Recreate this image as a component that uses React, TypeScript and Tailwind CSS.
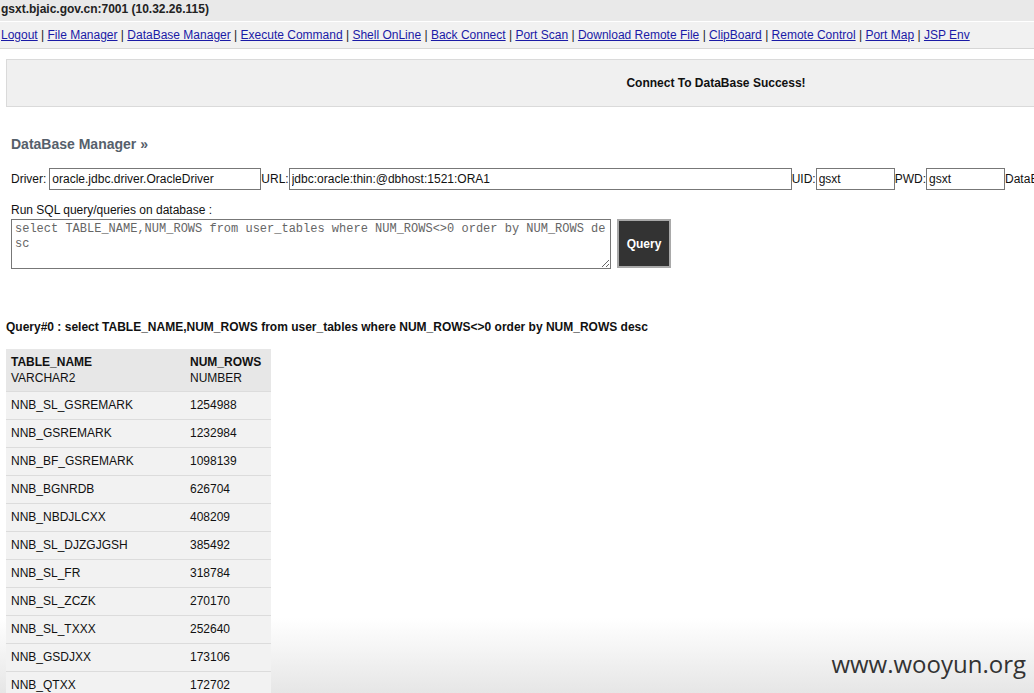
import React from 'react';

const links = [
  'Logout',
  'File Manager',
  'DataBase Manager',
  'Execute Command',
  'Shell OnLine',
  'Back Connect',
  'Port Scan',
  'Download Remote File',
  'ClipBoard',
  'Remote Control',
  'Port Map',
  'JSP Env',
];

const rows: [string, string][] = [
  ['NNB_SL_GSREMARK', '1254988'],
  ['NNB_GSREMARK', '1232984'],
  ['NNB_BF_GSREMARK', '1098139'],
  ['NNB_BGNRDB', '626704'],
  ['NNB_NBDJLCXX', '408209'],
  ['NNB_SL_DJZGJGSH', '385492'],
  ['NNB_SL_FR', '318784'],
  ['NNB_SL_ZCZK', '270170'],
  ['NNB_SL_TXXX', '252640'],
  ['NNB_GSDJXX', '173106'],
  ['NNB_QTXX', '172702'],
  ['NNB_SL_CZXX', '160233'],
];

const sql =
  'select TABLE_NAME,NUM_ROWS from user_tables where NUM_ROWS<>0 order by NUM_ROWS desc';

export default function App() {
  return (
    <div className="relative h-[693px] w-screen overflow-hidden bg-white font-['Liberation_Sans',Arial,sans-serif] text-[12px] text-[#111]">
      {/* bottom fade behind the page content */}
      <div className="pointer-events-none absolute inset-x-0 bottom-0 h-[75px] bg-gradient-to-b from-white/0 to-[#e6e6e6]" />

      {/* host bar */}
      <div className="relative h-[21px] w-[1500px] bg-[#e9e9e9] pl-px pt-[1px] text-[12px] font-bold leading-[16px] text-[#222]">
        gsxt.bjaic.gov.cn:7001 (10.32.26.115)
      </div>
      {/* nav */}
      <div className="relative h-[28px] w-[1500px] border-t border-t-white border-b border-b-[#d6d6d6] bg-[#f1f1f1] pl-px pt-[5px] text-[12px] leading-[16px]">
        {links.map((l, i) => (
          <span key={l}>
            <a href="#" className="text-[#1a1aa6] underline">
              {l}
            </a>
            {i < links.length - 1 && <span className="text-[#222]"> | </span>}
          </span>
        ))}
      </div>

      {/* message */}
      <div className="relative ml-[6px] mt-[10px] flex h-[48px] w-[1420px] items-center justify-center border border-[#dadada] bg-[#f0f0f0] text-[12px] font-bold">
        Connect To DataBase Success!
      </div>

      <div className="relative px-[11px]">
        <h2 className="mt-[29px] text-[14px] font-bold leading-[16px] text-[#56606b]">DataBase Manager »</h2>

        <div className="mt-[16px] flex w-[1200px] items-center text-[12px] leading-[16px]">
          <span className="mr-[3px]">Driver:</span>
          <input
            readOnly
            value="oracle.jdbc.driver.OracleDriver"
            className="h-[22px] w-[212px] border border-[#777] px-[2px] text-[12px] outline-none"
          />
          <span>URL:</span>
          <input
            readOnly
            value="jdbc:oracle:thin:@dbhost:1521:ORA1"
            className="h-[22px] w-[503px] border border-[#777] px-[2px] text-[12px] outline-none"
          />
          <span>UID:</span>
          <input
            readOnly
            value="gsxt"
            className="h-[22px] w-[79px] border border-[#777] px-[2px] text-[12px] outline-none"
          />
          <span>PWD:</span>
          <input
            readOnly
            value="gsxt"
            className="h-[22px] w-[79px] border border-[#777] px-[2px] text-[12px] outline-none"
          />
          <span>DataBase:</span>
        </div>

        <div className="mt-[13px] leading-[14px]">Run SQL query/queries on database :</div>
        <div className="mt-[2px] flex items-start gap-[6px]">
          <textarea
            readOnly
            value={sql}
            className="h-[50px] w-[600px] resize border border-[#777] px-[3px] pt-[2px] font-['Liberation_Mono','Courier_New',monospace] text-[12px] leading-[15px] break-all text-[#666] outline-none"
          />
          <button className="h-[49px] w-[54px] border-2 border-[#a9a9a9] bg-[#333] text-[12px] font-bold text-white">
            Query
          </button>
        </div>
      </div>

      <div className="relative mt-[50px] pl-[6px] text-[12px] font-bold leading-[16px]">Query#0 : {sql}</div>

      <table className="relative ml-[6px] mt-[14px] w-[265px] border-collapse text-[12px] leading-[16px]">
        <thead>
          <tr className="h-[42px] bg-[#e7e7e7]">
            <th className="pl-[5px] text-left align-middle font-normal">
              <div className="font-bold">TABLE_NAME</div>
              <div>VARCHAR2</div>
            </th>
            <th className="pl-[5px] text-left align-middle font-normal">
              <div className="font-bold">NUM_ROWS</div>
              <div>NUMBER</div>
            </th>
          </tr>
        </thead>
        <tbody>
          {rows.map(([name, n]) => (
            <tr key={name} className="h-[28px] border-t border-[#dcdcdc] bg-[#f2f2f2]">
              <td className="w-[179px] pl-[5px]">{name}</td>
              <td className="pl-[5px]">{n}</td>
            </tr>
          ))}
        </tbody>
      </table>

      {/* watermark */}
      <div className="pointer-events-none absolute bottom-[14px] right-[8px] font-['Open_Sans',sans-serif] text-[24px] leading-[30px] text-[#333]">
        www.wooyun.org
      </div>
    </div>
  );
}
